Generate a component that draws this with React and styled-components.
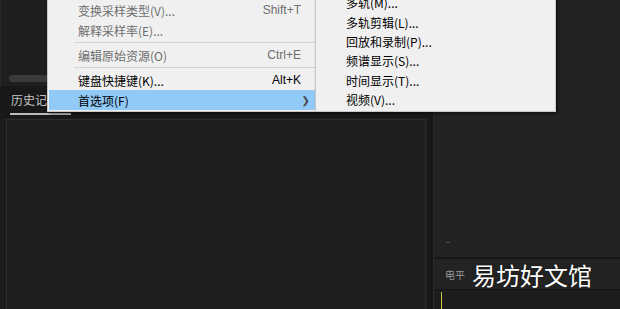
import React from "react";
import styled, { createGlobalStyle } from "styled-components";

const Global = createGlobalStyle`
  html, body { margin: 0; padding: 0; background: #1b1b1b; }
  body { font-family: "Noto Sans CJK SC", "Noto Sans", sans-serif; }
  #root { width: 620px; height: 309px; overflow: hidden; }
`;

const Page = styled.div`
  position: relative;
  width: 620px;
  height: 309px;
  display: flex;
  background: #1b1b1b;
  overflow: hidden;
`;

const LeftColumn = styled.div`
  width: 428px;
  display: flex;
  flex-direction: column;
`;

const TopArea = styled.div`
  height: 86px;
  display: flex;
  flex-direction: column;
  justify-content: flex-end;
  padding: 0 0 4px 8px;
  box-sizing: border-box;
  background: #1f1f1f;
  border-left: 1px solid #2a2a2a;
`;

const ScrollBar = styled.div`
  height: 7px;
  width: 120px;
  border-radius: 4px;
  background: #3a3a3a;
`;

const TabBar = styled.div`
  height: 32px;
  display: flex;
  align-items: flex-end;
  padding-left: 10px;
  background: #181818;
`;

const Tab = styled.div`
  font-size: 12px;
  color: #c4c4c4;
  padding: 0 0 5px 1px;
  width: 60px;
  border-bottom: 2px solid #bcbcbc;
  line-height: 16px;
  margin-bottom: 3px;
`;

const HistoryPanel = styled.div`
  flex: 1;
  margin: 1px 2px 0 6px;
  background: #1e1e1e;
  border: 1px solid #2c2c2c;
  border-bottom: none;
`;

const Divider = styled.div`
  width: 5px;
  background: #171717;
  border-right: 1px solid #2a2a2a;
`;

const RightColumn = styled.div`
  flex: 1;
  display: flex;
  flex-direction: column;
  background: #232323;
`;

const Monitor = styled.div`
  height: 257px;
  display: flex;
  align-items: flex-end;
  padding: 0 0 14px 12px;
  box-sizing: border-box;
`;

const Tick = styled.div`
  width: 4px;
  height: 1px;
  background: #555;
`;

const LevelHeader = styled.div`
  height: 30px;
  display: flex;
  align-items: center;
  padding-left: 11px;
  border-top: 2px solid #161616;
  border-bottom: 1px solid #161616;
  font-size: 10px;
  color: #9a9a9a;
`;

const LevelBody = styled.div`
  flex: 1;
  background: #1c1c1c;
  padding-left: 7px;
  display: flex;
`;

const Cursor = styled.div`
  width: 1px;
  margin-top: 2px;
  background: #c8c83a;
`;

const Menu = styled.div`
  position: absolute;
  left: ${(p) => p.$left}px;
  top: ${(p) => p.$top}px;
  width: ${(p) => p.$width}px;
  padding: ${(p) => p.$pad};
  box-sizing: border-box;
  background: #f0f0f0;
  border: 1px solid #c8c8c8;
  box-shadow: 2px 2px 3px rgba(0, 0, 0, 0.45);
  font-size: 12px;
  z-index: ${(p) => p.$z};
`;

const Item = styled.div`
  height: ${(p) => p.$h}px;
  display: flex;
  align-items: center;
  padding: 0 14px 0 29px;
  color: ${(p) => (p.$disabled ? "#6e6e6e" : "#000")};
  background: ${(p) => (p.$active ? "#91c9f7" : "transparent")};
  white-space: nowrap;
`;

const Label = styled.span`
  flex: 1;
`;

const Shortcut = styled.span`
  font-family: "Liberation Sans", Arial, sans-serif;
  font-size: 12px;
`;

const Arrow = styled.span`
  font-family: "DejaVu Sans", sans-serif;
  font-size: 10px;
  margin-right: -9px;
  color: #444;
`;

const Separator = styled.div`
  height: 5px;
  display: flex;
  align-items: center;
  padding-left: 25px;
  &::after {
    content: "";
    flex: 1;
    height: 1px;
    background: #d4d4d4;
  }
`;

const Watermark = styled.div`
  position: absolute;
  left: 472px;
  top: 259px;
  font-size: 24px;
  line-height: 32px;
  color: #ffffff;
  text-shadow: 0 0 2px rgba(0, 0, 0, 0.6);
  z-index: 5;
`;

const mainItems = [
  { type: "item", label: "变换采样类型(V)...", key: "Shift+T", disabled: true },
  { type: "item", label: "解释采样率(E)...", disabled: true },
  { type: "sep" },
  { type: "item", label: "编辑原始资源(O)", key: "Ctrl+E", disabled: true },
  { type: "sep" },
  { type: "item", label: "键盘快捷键(K)...", key: "Alt+K" },
  { type: "item", label: "首选项(F)", active: true, arrow: true },
];

const subItems = [
  "多轨(M)...",
  "多轨剪辑(L)...",
  "回放和录制(P)...",
  "频谱显示(S)...",
  "时间显示(T)...",
  "视频(V)...",
];

export default function App() {
  return (
    <>
      <Global />
      <Page>
        <LeftColumn>
          <TopArea>
            <ScrollBar />
          </TopArea>
          <TabBar>
            <Tab>历史记录</Tab>
          </TabBar>
          <HistoryPanel />
        </LeftColumn>
        <Divider />
        <RightColumn>
          <Monitor>
            <Tick />
          </Monitor>
          <LevelHeader>电平</LevelHeader>
          <LevelBody>
            <Cursor />
          </LevelBody>
        </RightColumn>

        <Menu $left={47} $top={-4} $width={270} $pad="3px 1px 1px 1px" $z={3}>
          {mainItems.map((it, i) =>
            it.type === "sep" ? (
              <Separator key={i} />
            ) : (
              <Item key={i} $h={20} $disabled={it.disabled} $active={it.active}>
                <Label>{it.label}</Label>
                {it.key && <Shortcut>{it.key}</Shortcut>}
                {it.arrow && <Arrow>❯</Arrow>}
              </Item>
            )
          )}
        </Menu>

        <Menu $left={315} $top={-10} $width={241} $pad="2px 1px 2px 1px" $z={4}>
          {subItems.map((s) => (
            <Item key={s} $h={19.4}>
              <Label>{s}</Label>
            </Item>
          ))}
        </Menu>

        <Watermark>易坊好文馆</Watermark>
      </Page>
    </>
  );
}
